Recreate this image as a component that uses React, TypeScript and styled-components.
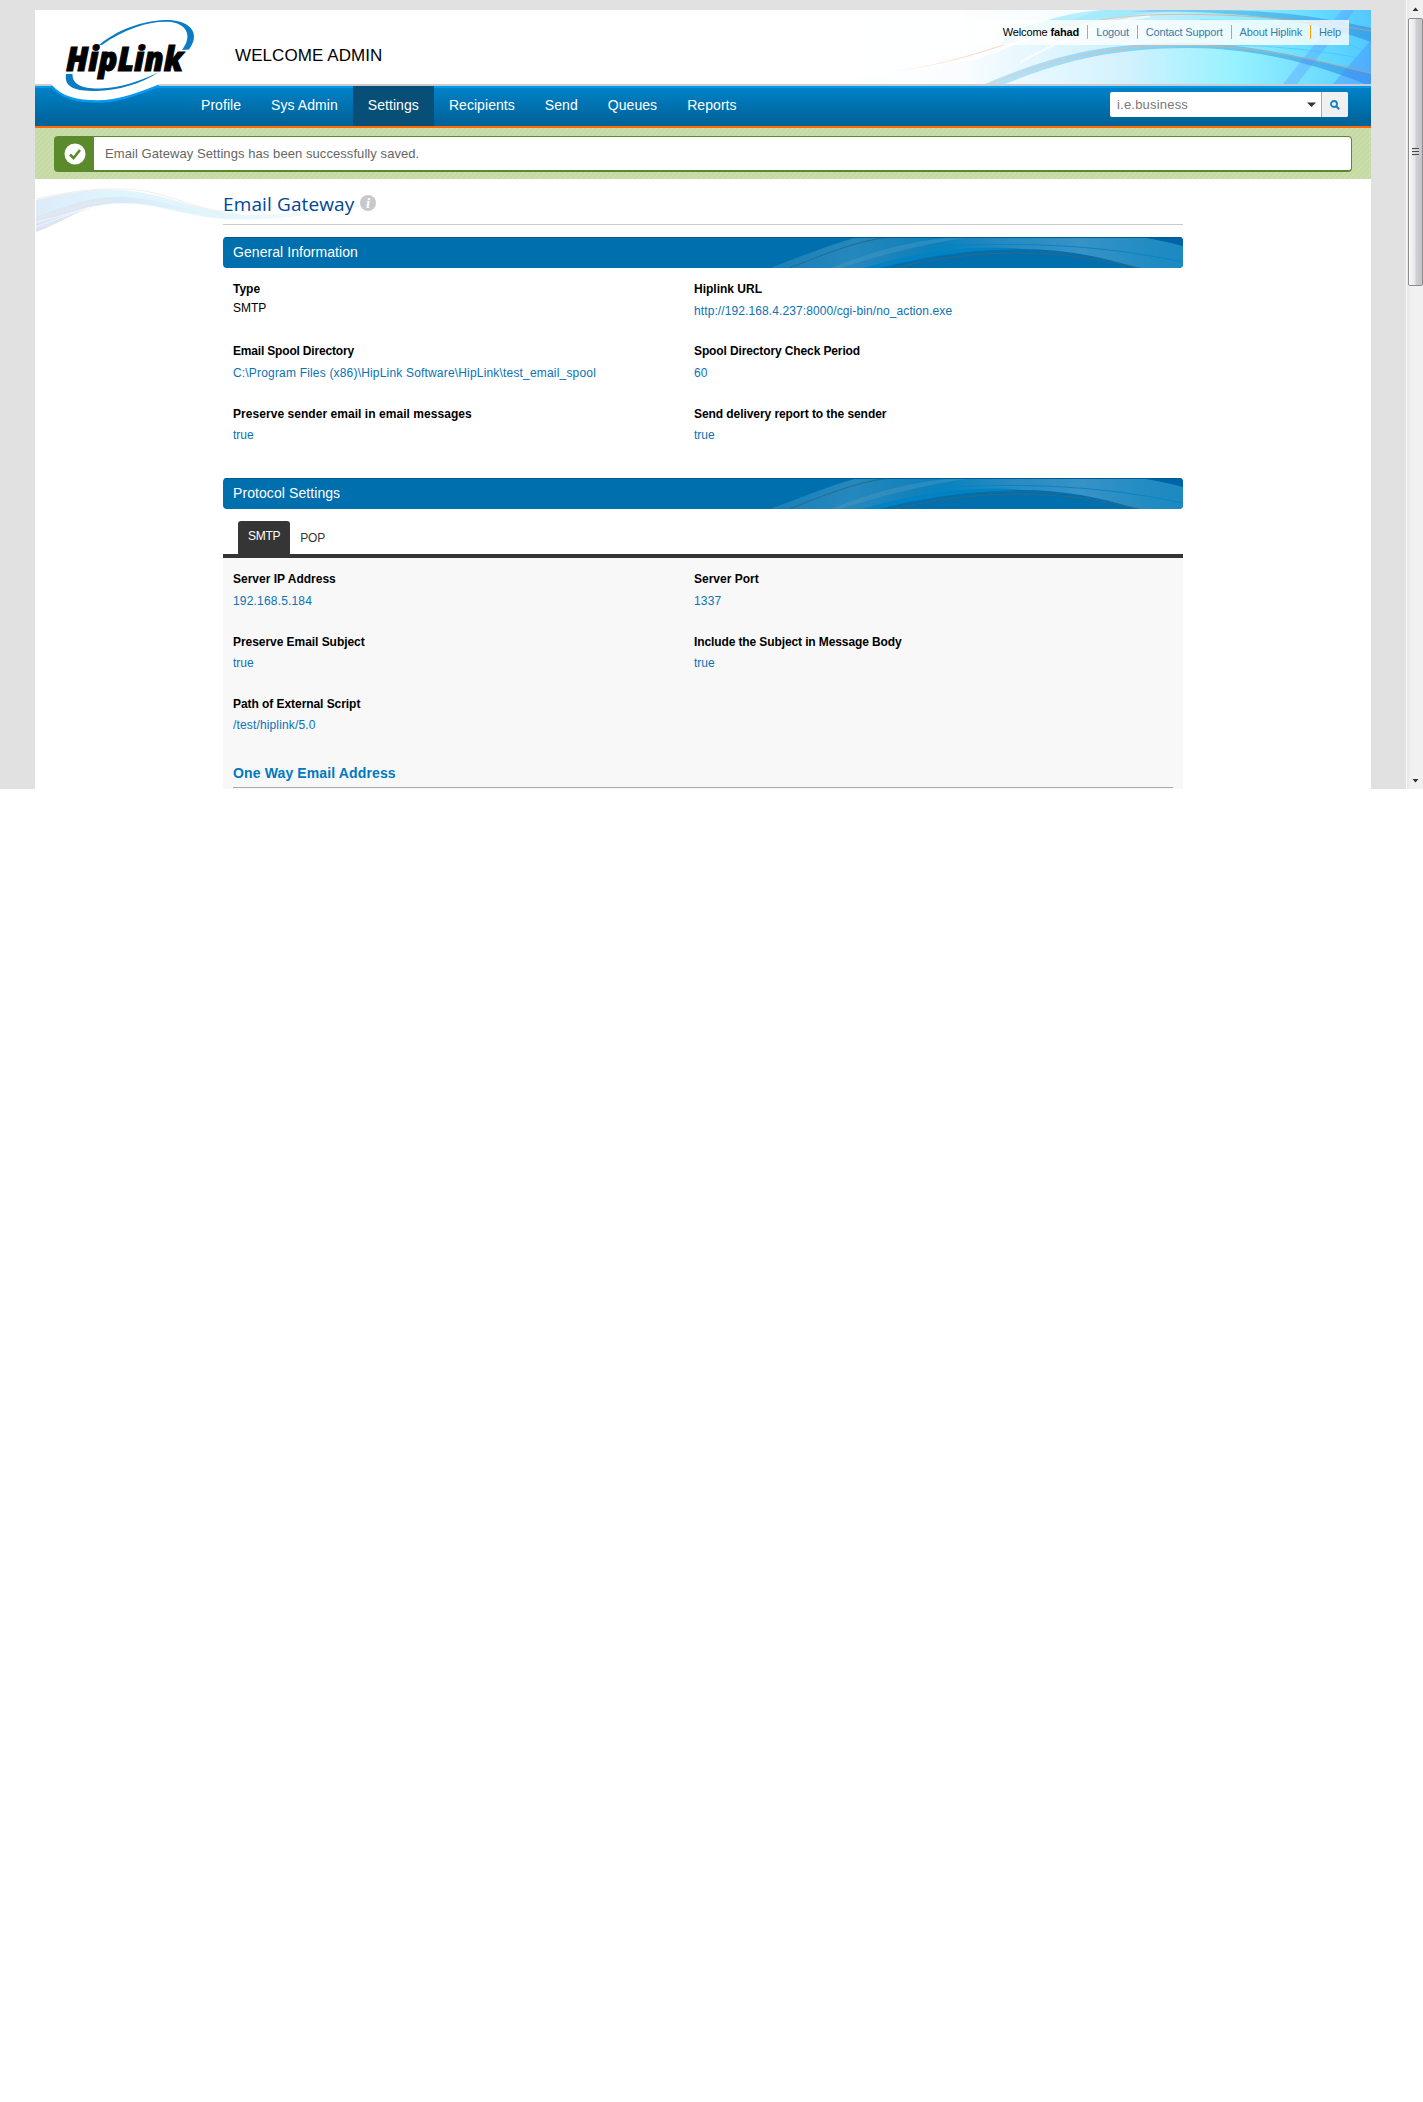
import React from "react";
import styled, { createGlobalStyle } from "styled-components";

const sans = `"Liberation Sans", Arial, Helvetica, sans-serif`;

const GlobalStyle = createGlobalStyle`
  *, *::before, *::after { box-sizing: border-box; }
  body { margin: 0; background: #fff; font-family: ${sans}; font-size: 12px; color: #000; }
  a { text-decoration: none; color: inherit; }
`;

const Browser = styled.div`
  display: flex;
  width: 1423px;
  height: 789px;
  overflow: hidden;
  background: #e1e1e1;
`;

const Viewport = styled.div`
  flex: 1;
  padding: 10px 35px 0;
`;

const Page = styled.div`
  height: 779px;
  background: #fff;
  display: flex;
  flex-direction: column;
`;

const Text = styled.span<{ $track?: number }>`
  letter-spacing: ${(p) => p.$track ?? 0}px;
  white-space: nowrap;
`;

/* ---------- header ---------- */

const Header = styled.header`
  position: relative;
  height: 76px;
  border-bottom: 2px solid #cbcbcb;
  display: flex;
  justify-content: space-between;
`;

const HeaderArt = styled.svg`
  position: absolute;
  right: 0;
  top: 0;
`;

const LogoArt = styled.svg`
  position: absolute;
  left: 0;
  top: 0;
  z-index: 2;
`;

const Greeting = styled.div`
  padding: 35px 0 0 200px;
  font-size: 17px;
  line-height: 22px;
  letter-spacing: 0.08px;
`;

const UserLinks = styled.nav`
  position: relative;
  margin: 10px 22px 0 0;
  height: 25px;
  padding: 0 8px 2px 100px;
  display: flex;
  align-items: center;
  font-size: 11px;
  letter-spacing: -0.18px;
  background: linear-gradient(90deg, rgba(255, 255, 255, 0), rgba(255, 255, 255, 0.8) 110px);
`;

const UserLink = styled.a`
  margin-left: 8px;
  padding-left: 8px;
  border-left: 1px solid #ff9c00;
  line-height: 14px;
  height: 14px;
  color: #3a7ba8;
  white-space: nowrap;
`;

/* ---------- main navigation ---------- */

const NavBar = styled.nav`
  height: 42px;
  padding: 0 23px 0 151px;
  display: flex;
  justify-content: space-between;
  background: linear-gradient(#0099f0 0 2px, #0082c8 2px, #00639a 36px, #00639a);
  border-bottom: 2px solid #ff6a00;
`;

const NavItems = styled.div`
  display: flex;
`;

const NavItem = styled.a<{ $active?: boolean }>`
  padding: 0 15px;
  font-size: 14px;
  line-height: 38px;
  letter-spacing: 0.06px;
  color: #fff;
  background: ${(p) => (p.$active ? "#084f78" : "transparent")};
`;

const Search = styled.div`
  display: flex;
  margin-top: 6px;
  width: 238px;
  height: 25px;
  border-radius: 2px;
  overflow: hidden;
  background: #fff;
`;

const SearchField = styled.div`
  flex: 1;
  display: flex;
  align-items: center;
  justify-content: space-between;
  padding: 0 5px 0 7px;
  font-size: 13px;
  color: #777;
`;

const SearchButton = styled.button`
  width: 27px;
  border: 0;
  border-left: 1px solid #aaa;
  padding: 0;
  background: #f0f0f0;
  display: flex;
  align-items: center;
  justify-content: center;
`;

/* ---------- success message ---------- */

const NoticeStrip = styled.div`
  height: 51px;
  padding: 8px 19px 0;
  background: repeating-linear-gradient(135deg, #c6daa5 0 2.5px, #d0e2b3 3.2px, #c6daa5 3.7px);
`;

const Notice = styled.div`
  height: 36px;
  display: flex;
  border: 1px solid #5b8a2c;
  border-bottom-width: 2px;
  border-radius: 4px;
  background: #fff;
  font-size: 13px;
  line-height: 33px;
  color: #666;
`;

const NoticeIcon = styled.div`
  width: 39px;
  margin-right: 11px;
  background: #5b8a2c;
  display: flex;
  align-items: center;
  justify-content: center;
`;

/* ---------- content ---------- */

const Main = styled.main`
  position: relative;
  flex: 1;
  padding: 0 188px;
  display: flex;
  flex-direction: column;
`;

const WaveArt = styled.svg`
  position: absolute;
  left: 0;
  top: 0;
`;

const TitleRow = styled.div`
  position: relative;
  height: 46px;
  padding-top: 11px;
  border-bottom: 1px solid #cbcbcb;
  display: flex;
  align-items: flex-start;
  gap: 6px;
`;

const Title = styled.h1`
  margin: 0;
  font: 400 19px/28px "Open Sans", sans-serif;
  letter-spacing: 0.12px;
  color: #00469a;
`;

const InfoIcon = styled.svg`
  margin-top: 5px;
`;

const SectionBar = styled.h2`
  position: relative;
  flex: none;
  margin: 12px 0 0;
  height: 31px;
  padding-left: 10px;
  font-size: 14px;
  font-weight: 400;
  line-height: 31px;
  color: #fff;
  border-radius: 4px;
  overflow: hidden;
  background: #006fae;
`;

const BarArt = styled.svg`
  position: absolute;
  left: 0;
  top: 0;
`;

const BarLabel = styled(Text)`
  position: relative;
`;

const Fields = styled.div<{ $rows: string; $top: number }>`
  display: grid;
  grid-template-columns: 461px 1fr;
  grid-template-rows: ${(p) => p.$rows};
  padding: ${(p) => p.$top}px 10px 0;
`;

const Field = styled.div<{ $gap: number }>`
  display: flex;
  flex-direction: column;
  gap: ${(p) => p.$gap}px;
  line-height: 16px;
`;

const FieldLabel = styled(Text)`
  font-weight: 700;
`;

const FieldValue = styled(Text)<{ $plain?: boolean }>`
  color: ${(p) => (p.$plain ? "#000" : "#0a72b5")};
`;

const Tabs = styled.div`
  height: 49px;
  padding: 12px 15px 0;
  border-bottom: 4px solid #353535;
  display: flex;
`;

const Tab = styled.a<{ $active?: boolean }>`
  padding: ${(p) => (p.$active ? "0 10px" : "2px 10px 0")};
  line-height: 30px;
  letter-spacing: -0.25px;
  border-radius: 3px 3px 0 0;
  color: ${(p) => (p.$active ? "#fff" : "#353535")};
  background: ${(p) => (p.$active ? "#353535" : "transparent")};
`;

const TabPanel = styled.div`
  flex: 1;
  background: #f8f8f8;
`;

const SubHeading = styled.h3`
  margin: 0 10px;
  height: 25px;
  line-height: 20px;
  font-size: 14px;
  color: #0079c1;
  border-bottom: 1px solid #a9a9a9;
`;

/* ---------- scrollbar ---------- */

const ScrollTrack = styled.div`
  width: 17px;
  height: 789px;
  display: flex;
  flex-direction: column;
  align-items: center;
  border-left: 1px solid #fafafa;
  background: linear-gradient(90deg, #e6e6e6, #f0f0f0 4px, #f1f1f1);
`;

const ScrollArrow = styled.svg`
  flex: none;
`;

const ScrollThumb = styled.div`
  width: 15px;
  height: 268px;
  margin-bottom: auto;
  border: 1px solid #8d8d8d;
  border-radius: 2px;
  background: linear-gradient(90deg, #fafafa, #e6e6e8 45%, #cfcfd3 55%, #c4c4c8);
  display: flex;
  flex-direction: column;
  align-items: center;
  justify-content: center;
  gap: 1px;
`;

const Grip = styled.i`
  width: 7px;
  height: 2px;
  background: #4a4a4a;
  border-bottom: 1px solid #d8d8d8;
`;

const SectionSwoosh = () => (
  <BarArt width="960" height="31" viewBox="0 0 960 31">
    <defs>
      <linearGradient id="ribbon" x1="547" x2="960" y1="0" y2="0" gradientUnits="userSpaceOnUse">
        <stop offset="0" stopColor="#1a80b9" />
        <stop offset=".2" stopColor="#2588bd" />
        <stop offset=".34" stopColor="#1481bb" />
        <stop offset=".42" stopColor="#0882be" />
        <stop offset=".55" stopColor="#2489c0" />
        <stop offset=".75" stopColor="#3892c5" />
        <stop offset=".95" stopColor="#1d8bc2" />
      </linearGradient>
    </defs>
    <path d="M547 31C580 19 605 8 635 0H920Q945 4 960 9V31H914Q855 12 800 12C745 12 700 20 655 31Z" fill="url(#ribbon)" />
    <path d="M917 0Q942 4 960 9V0Z" fill="#0062a8" />
    <path d="M608 31C650 14 690 3 735 0H750C710 5 660 17 618 31Z" fill="#4a9ac2" opacity=".45" />
    <path d="M640 31C690 16 745 7 800 12C745 12 700 20 655 31Z" fill="#0082c4" />
    <path d="M566 31C600 18 632 4 667 0" fill="none" stroke="#28698c" strokeWidth="1" />
    <path d="M672 31C750 12 830 10 917 31" fill="none" stroke="#42657a" strokeWidth=".8" />
    <path d="M710 10C790 5 870 6 960 25" fill="none" stroke="#0884c4" strokeWidth="1" />
    <path d="M0 .5H960" stroke="#005a8d" />
  </BarArt>
);

const HeaderSwoosh = () => (
  <HeaderArt width="571" height="74" viewBox="800 10 571 74">
    <defs>
      <linearGradient id="sky" x1="0" x2="1">
        <stop offset="0" stopColor="#fff" />
        <stop offset=".28" stopColor="#fafdff" />
        <stop offset=".45" stopColor="#def5fe" />
        <stop offset=".62" stopColor="#c2effe" />
        <stop offset=".78" stopColor="#90ebff" />
        <stop offset=".9" stopColor="#66dcff" />
        <stop offset="1" stopColor="#52c8ff" />
      </linearGradient>
      <linearGradient id="band" x1="960" x2="1371" y1="0" y2="0" gradientUnits="userSpaceOnUse">
        <stop offset="0" stopColor="#c4e8fa" />
        <stop offset=".35" stopColor="#94d6f4" />
        <stop offset=".7" stopColor="#5fc3ee" />
        <stop offset="1" stopColor="#39a4ec" />
      </linearGradient>
      <linearGradient id="hill" x1="990" x2="1371" y1="0" y2="0" gradientUnits="userSpaceOnUse">
        <stop offset="0" stopColor="#f2fbff" />
        <stop offset=".35" stopColor="#d3f2fe" />
        <stop offset=".65" stopColor="#95f1ff" />
        <stop offset="1" stopColor="#58d0ff" />
      </linearGradient>
      <linearGradient id="thread" x1="890" x2="1371" y1="0" y2="0" gradientUnits="userSpaceOnUse">
        <stop offset="0" stopColor="#f6c8b0" stopOpacity="0" />
        <stop offset=".15" stopColor="#f6c8b0" stopOpacity=".7" />
        <stop offset=".6" stopColor="#dcb89c" />
        <stop offset="1" stopColor="#a89a98" />
      </linearGradient>
    </defs>
    <rect x="800" y="10" width="571" height="74" fill="url(#sky)" />
    <path d="M830 84C870 74 930 68 975 60C1010 50 1040 30 1100 10H800V84Z" fill="#fff" opacity=".75" />
    <path d="M1010 32C1060 14 1090 10 1110 10H1190C1120 14 1060 26 1000 45Z" fill="#82e2fb" opacity=".55" />
    <path d="M1130 12C1220 10 1300 16 1371 42V28C1310 14 1260 10 1210 10H1150Z" fill="url(#band)" />
    <path d="M1005 84C1080 54 1130 45 1190 47C1270 50 1330 70 1371 84Z" fill="url(#hill)" />
    <path d="M985 84C1060 52 1110 43 1190 43C1260 44 1320 62 1371 74V84H1365C1310 62 1250 48 1190 48C1110 48 1060 62 1005 84Z" fill="url(#band)" />
    <path d="M1020 62C1060 42 1090 24 1150 16" stroke="#fff" strokeWidth="2.5" opacity=".65" fill="none" />
    <path d="M1283 84L1342 10H1355L1297 84Z" fill="#5a8fff" opacity=".32" />
    <path d="M1333 84L1371 40V84Z" fill="#4a8aff" opacity=".4" />
    <path d="M1230 45Q1300 46 1371 60M1200 20Q1300 20 1371 54" stroke="#36c0fa" opacity=".5" fill="none" />
    <path d="M895 71C990 60 1040 20 1150 15C1230 12 1310 20 1371 31" stroke="url(#thread)" strokeWidth=".9" fill="none" />
    <path d="M990 84C1060 56 1110 46 1180 45C1260 45 1320 62 1371 73" stroke="url(#thread)" strokeWidth=".9" fill="none" />
  </HeaderArt>
);

const Logo = () => (
  <LogoArt width="190" height="96" viewBox="35 10 190 96">
    <path d="M51 84C62 98 77 101.500 98 101.500C122 101.500 144 91 160 84L150 80H60Z" fill="#fff" />
    <path d="M51 86C62 98 77 101.500 98 101.500C122 101.500 144 91 159 86" fill="none" stroke="#0999f0" strokeWidth="2.4" />
    <path d="M99 45C122 26 149 20 168 20C193 21 200 35 189 49.500L182 50C193 36 187 23 168 21.800C149 21 124 29 102 45Z" fill="#0a7cc4" />
    <path d="M66 74H72.500C72 85 84 89 100 88.500C120 88 141 81 159 72C141 84 118 90.500 96 91C74 91 64 87 66 74Z" fill="#0a7cc4" />
    <text
      x="66"
      y="70.500"
      textLength="117"
      lengthAdjust="spacingAndGlyphs"
      fontFamily='"Open Sans", sans-serif'
      fontWeight="800"
      fontStyle="italic"
      fontSize="34"
      fill="#000"
      stroke="#000"
      strokeWidth="1.1"
    >
      HipLink
    </text>
  </LogoArt>
);

const PageWave = () => (
  <WaveArt width="330" height="60" viewBox="35 179 330 60">
    <defs>
      <linearGradient id="mist" x1="0" x2="1">
        <stop offset="0" stopColor="#dcecf9" />
        <stop offset=".25" stopColor="#dff5fd" />
        <stop offset=".6" stopColor="#e2f5fc" />
        <stop offset="1" stopColor="#fff" />
      </linearGradient>
      <linearGradient id="lavender" x1="0" x2="1">
        <stop offset="0" stopColor="#dde5f4" />
        <stop offset=".5" stopColor="#d7eaf7" />
        <stop offset="1" stopColor="#e2f5fc" />
      </linearGradient>
    </defs>
    <path d="M36 200C70 192 100 187 130 191C175 196 200 213 250 215C290 215 320 208 350 206C310 216 270 221 225 219C180 216 150 200 110 204C80 207 60 214 36 218Z" fill="url(#mist)" />
    <path d="M36 217C60 210 80 197 120 197C160 198 180 208 205 214C170 210 140 200 105 204C80 208 60 224 36 232Z" fill="url(#lavender)" />
    <path d="M36 222C60 217 75 211 95 206M36 227C55 220 70 214 90 207" stroke="#fff" strokeWidth=".6" fill="none" />
    <path d="M36 199C75 190 110 186 145 191C175 197 195 208 225 212M36 218C65 212 85 203 110 200" stroke="#f8e6dc" strokeWidth=".8" fill="none" />
  </WaveArt>
);

type Item = { label: string; value: string; gap?: number; plain?: boolean; lt?: number; vt?: number };

const general: Item[] = [
  { label: "Type", value: "SMTP", gap: 3, plain: true },
  { label: "Hiplink URL", value: "http://192.168.4.237:8000/cgi-bin/no_action.exe", vt: 0.1 },
  {
    label: "Email Spool Directory",
    value: "C:\\Program Files (x86)\\HipLink Software\\HipLink\\test_email_spool",
    lt: -0.18,
    vt: 0.18,
  },
  { label: "Spool Directory Check Period", value: "60", lt: -0.12, vt: 0.2 },
  { label: "Preserve sender email in email messages", value: "true", gap: 5, lt: 0.05 },
  { label: "Send delivery report to the sender", value: "true", gap: 5, lt: -0.07 },
];

const smtp: Item[] = [
  { label: "Server IP Address", value: "192.168.5.184", vt: 0.18 },
  { label: "Server Port", value: "1337", vt: 0.2 },
  { label: "Preserve Email Subject", value: "true", gap: 5, lt: -0.05 },
  { label: "Include the Subject in Message Body", value: "true", gap: 5, lt: -0.11 },
  { label: "Path of External Script", value: "/test/hiplink/5.0", gap: 5, lt: -0.06, vt: 0.15 },
];

const FieldList = ({ items, rows, top }: { items: Item[]; rows: string; top: number }) => (
  <Fields $rows={rows} $top={top}>
    {items.map((f) => (
      <Field key={f.label} $gap={f.gap ?? 6}>
        <FieldLabel $track={f.lt}>{f.label}</FieldLabel>
        <FieldValue $track={f.vt} $plain={f.plain}>
          {f.value}
        </FieldValue>
      </Field>
    ))}
  </Fields>
);

export default function App() {
  return (
    <>
      <GlobalStyle />
      <Browser>
        <Viewport>
          <Page>
            <Header>
              <HeaderSwoosh />
              <Logo />
              <Greeting>WELCOME ADMIN</Greeting>
              <UserLinks>
                <Text $track={-0.12}>
                  Welcome <b>fahad</b>
                </Text>
                <UserLink>Logout</UserLink>
                <UserLink>Contact Support</UserLink>
                <UserLink>About Hiplink</UserLink>
                <UserLink>Help</UserLink>
              </UserLinks>
            </Header>
            <NavBar>
              <NavItems>
                {["Profile", "Sys Admin", "Settings", "Recipients", "Send", "Queues", "Reports"].map((n) => (
                  <NavItem key={n} $active={n === "Settings"}>
                    {n}
                  </NavItem>
                ))}
              </NavItems>
              <Search>
                <SearchField>
                  <Text $track={0.2}>i.e.business</Text>
                  <svg width="9" height="5" viewBox="0 0 9 5">
                    <path d="M0 .5H9L4.500 5Z" fill="#333" />
                  </svg>
                </SearchField>
                <SearchButton aria-label="Search">
                  <svg width="10" height="10" viewBox="0 0 10 10" fill="none" stroke="#1580c4">
                    <circle cx="4" cy="4" r="3" strokeWidth="1.8" />
                    <path d="M6.300 6.300L9.200 9.200" strokeWidth="2" />
                  </svg>
                </SearchButton>
              </Search>
            </NavBar>
            <NoticeStrip>
              <Notice>
                <NoticeIcon>
                  <svg width="22" height="22" viewBox="0 0 22 22">
                    <circle cx="11" cy="11" r="10.500" fill="#fff" />
                    <path d="M6 11.500L9.500 15L16 7" fill="none" stroke="#5b8a2c" strokeWidth="2.6" />
                  </svg>
                </NoticeIcon>
                <Text $track={0.07}>Email Gateway Settings has been successfully saved.</Text>
              </Notice>
            </NoticeStrip>
            <Main>
              <PageWave />
              <TitleRow>
                <Title>Email Gateway</Title>
                <InfoIcon width="16" height="16" viewBox="0 0 16 16">
                  <circle cx="8" cy="8" r="8" fill="#c8c8c8" />
                  <text x="8.200" y="13" textAnchor="middle" fontFamily='"Liberation Serif", serif' fontSize="15" fontWeight="700" fontStyle="italic" fill="#fff">
                    i
                  </text>
                </InfoIcon>
              </TitleRow>
              <SectionBar>
                <SectionSwoosh />
                <BarLabel $track={0.06}>General Information</BarLabel>
              </SectionBar>
              <FieldList items={general} rows="62px 63px 60px" top={13} />
              <SectionBar>
                <SectionSwoosh />
                <BarLabel $track={0.08}>Protocol Settings</BarLabel>
              </SectionBar>
              <Tabs>
                <Tab $active>SMTP</Tab>
                <Tab>POP</Tab>
              </Tabs>
              <TabPanel>
                <FieldList items={smtp} rows="63px 62px 67px" top={13} />
                <SubHeading>
                  <Text $track={0.13}>One Way Email Address</Text>
                </SubHeading>
              </TabPanel>
            </Main>
          </Page>
        </Viewport>
        <ScrollTrack>
          <ScrollArrow width="15" height="18" viewBox="0 0 15 18">
            <path d="M4.500 11L7.500 7.500L10.500 11Z" fill="#333" />
          </ScrollArrow>
          <ScrollThumb>
            <Grip />
            <Grip />
            <Grip />
          </ScrollThumb>
          <ScrollArrow width="15" height="17" viewBox="0 0 15 17">
            <path d="M4.500 7L7.500 10.500L10.500 7Z" fill="#333" />
          </ScrollArrow>
        </ScrollTrack>
      </Browser>
    </>
  );
}
